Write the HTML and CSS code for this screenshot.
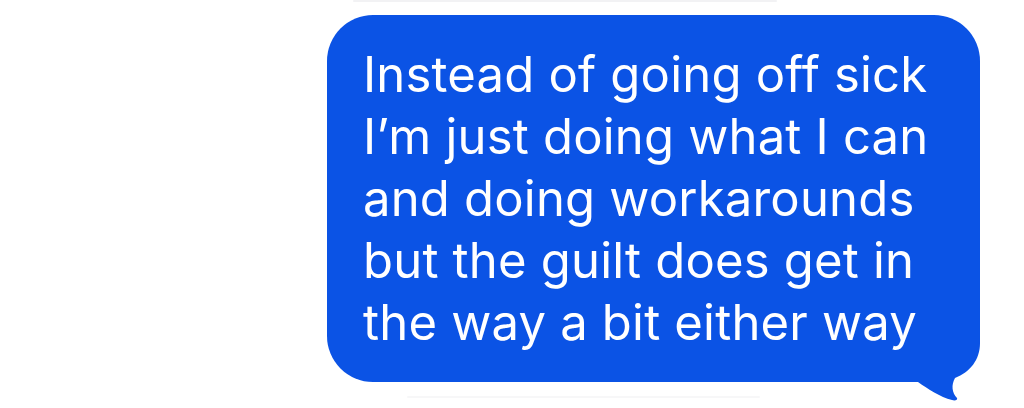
FILE: index.html
```html
<!DOCTYPE html>
<html lang="en">
<head>
<meta charset="utf-8">
<link rel="stylesheet" href="styles.css">
</head>
<body>
<div class="thread">
  <div class="sliver sliver-top"></div>
  <div class="bubble">
    <svg class="tail" width="90" height="80" viewBox="900 325 90 80" aria-hidden="true">
      <path d="M980 325 L980 343 C980 360 970 372 955 378 C951 385 952 393 957 398 C958 400 955 401 952 400 C940 397 928 389 918 382 L900 382 L900 325 Z" fill="#0b53e5"/>
    </svg>
    <p class="msg">Instead of going off sick<br>I’m just doing what I can<br>and doing workarounds<br>but the guilt does get in<br>the way a bit either way</p>
  </div>
  <div class="sliver sliver-bottom"></div>
</div>
</body>
</html>
```
FILE: styles.css
```css
html, body {
  margin: 0;
  padding: 0;
  background: #ffffff;
}
body {
  width: 1024px;
  height: 408px;
  overflow: hidden;
  font-family: "Inter", "Roboto", "Liberation Sans", sans-serif;
}
.thread {
  display: flex;
  flex-direction: column;
  align-items: flex-start;
}
.sliver {
  height: 2px;
  border-radius: 1px;
  background: #f2f2f4;
}
.sliver-top {
  margin-left: 353px;
  width: 424px;
}
.sliver-bottom {
  margin-left: 407px;
  margin-top: 14px;
  width: 353px;
  background: #f7f7f8;
}
.bubble {
  position: relative;
  margin-top: 13px;
  margin-left: 327px;
  width: 653px;
  height: 367px;
  box-sizing: border-box;
  padding: 29px 0 0 36px;
  background: #0b53e5;
  border-radius: 46px;
}
.msg {
  position: relative;
  z-index: 1;
  margin: 0;
  color: #ffffff;
  font-size: 49px;
  line-height: 62px;
  font-weight: 400;
  letter-spacing: 0.2px;
  white-space: nowrap;
}
.tail {
  position: absolute;
  left: 573px;
  top: 310px;
  z-index: 0;
}
```
